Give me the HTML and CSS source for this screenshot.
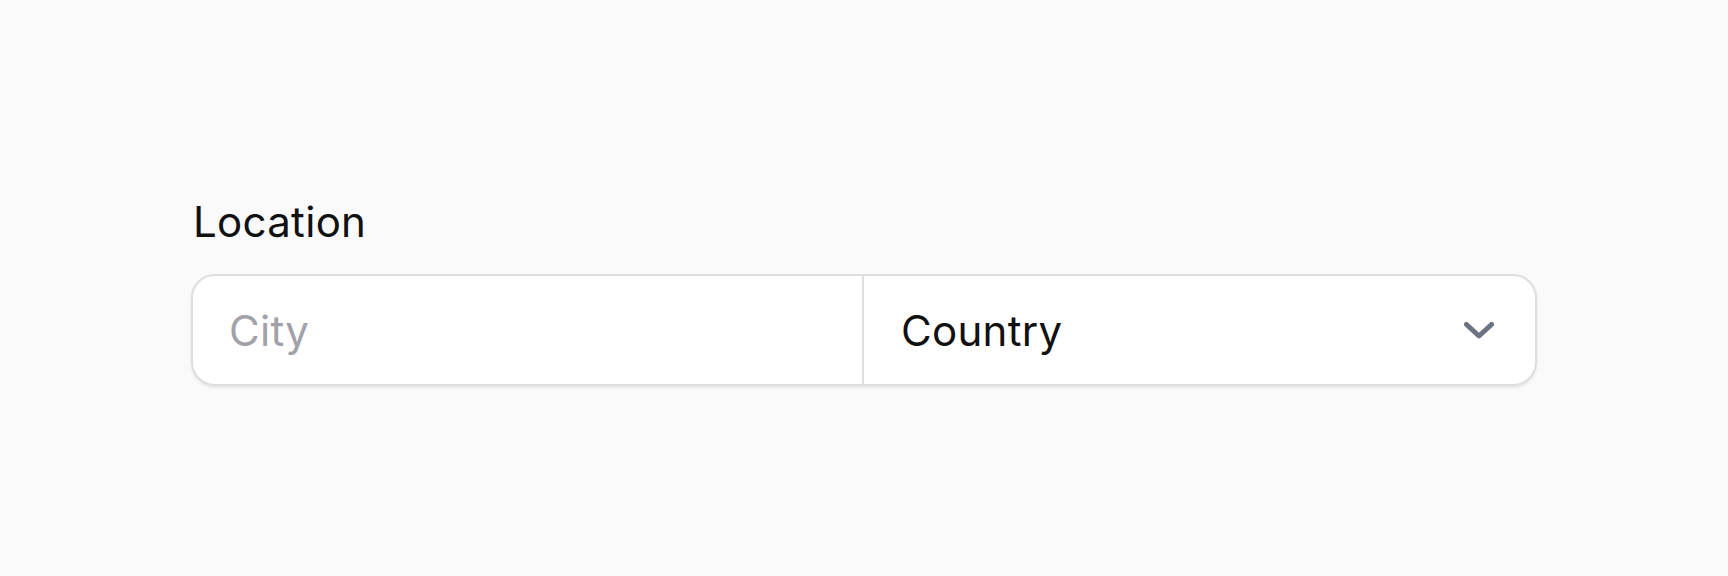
FILE: index.html
```html
<!DOCTYPE html>
<html lang="en">

<head>
    <meta charset="UTF-8">
    <meta name="viewport" content="width=device-width, initial-scale=1.0">
    <title>Location</title>
    <link rel="stylesheet" href="styles.css">
</head>

<body>
    <div class="field">
        <label class="field-label" for="city">Location</label>
        <div class="group">
            <input class="group-input" type="text" id="city" placeholder="City">
            <div class="group-select">
                <select class="select" aria-label="Country">
                    <option>Country</option>
                    <option>Germany</option>
                    <option>France</option>
                    <option>Japan</option>
                </select>
                <svg class="chevron" width="32" height="20" viewBox="0 0 32 20" aria-hidden="true">
                    <polyline points="3.5,4.5 16,16 28.5,4.5" fill="none" stroke="currentColor" stroke-width="5"
                        stroke-linecap="round" stroke-linejoin="round" />
                </svg>
            </div>
        </div>
    </div>
</body>

</html>
```

FILE: styles.css
```css
html {
    background: #fafafa;
}

body {
    margin: 0;
    min-height: 100vh;
    display: flex;
    align-items: center;
    justify-content: center;
    font-family: Inter, "Noto Sans", sans-serif;
    color: #111;
}

.field {
    width: 1346px;
    display: flex;
    flex-direction: column;
    gap: 24px;
    margin-top: 4px;
}

.field-label {
    font-size: 42px;
    line-height: 56px;
    letter-spacing: 0.3px;
    padding-left: 2px;
}

.group {
    display: grid;
    grid-template-columns: 1fr 1fr;
    height: 112px;
    box-sizing: border-box;
    background: #fff;
    border: 2px solid #dedede;
    border-radius: 24px;
    box-shadow: 0 2px 3px rgba(0, 0, 0, 0.08);
    overflow: hidden;
}

.group-input,
.select {
    font: inherit;
    font-size: 42px;
    letter-spacing: 0.3px;
    color: #111;
    border: 0;
    outline: 0;
    background: transparent;
    margin: 0;
    min-width: 0;
}

.group-input {
    padding: 0 36px;
    border-right: 2px solid #dedede;
}

.group-input::placeholder {
    color: #a1a1aa;
}

.group-select {
    position: relative;
    display: flex;
}

.select {
    appearance: none;
    flex: 1;
    padding: 0 100px 0 37px;
}

.chevron {
    position: absolute;
    right: 40px;
    top: 50%;
    transform: translateY(-50%);
    color: #6b7280;
    pointer-events: none;
}
```
